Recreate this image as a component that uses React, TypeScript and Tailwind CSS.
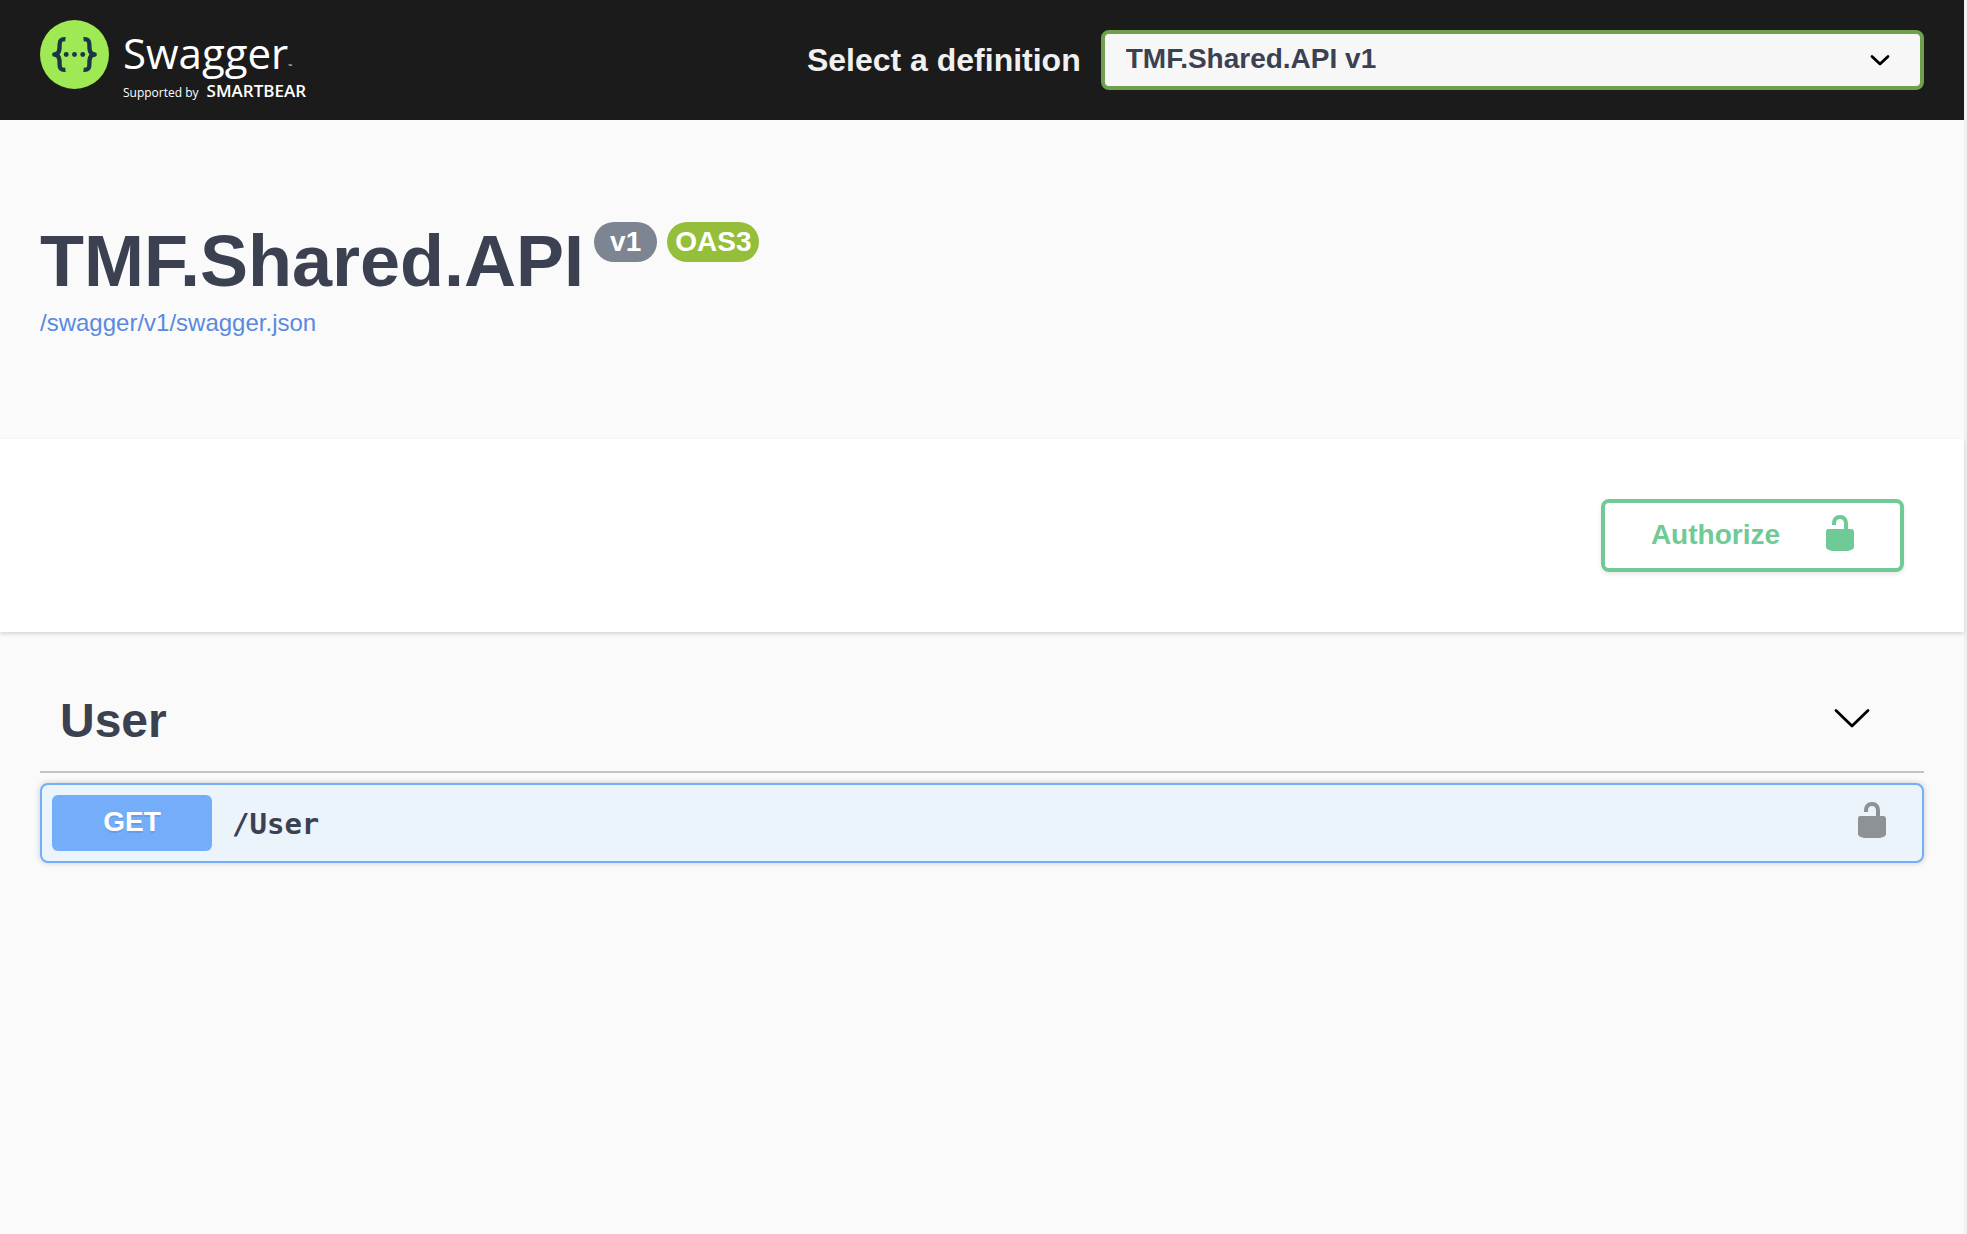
import React from "react";

function SwaggerMark() {
  return (
    <svg className="size-[69px] shrink-0" viewBox="0 0 70 70" aria-hidden="true">
      <circle cx="35" cy="35" r="35" fill="#9fe954" />
      <g fill="none" stroke="#1b3644" strokeWidth="4.4" strokeLinejoin="round">
        <path d="M25.8 19.5C21.5 19 19.8 20.8 19.9 25c.1 5.500-.2 9.500-5.400 10 5.200.5 5.500 4.500 5.400 10-.1 4.200 1.600 6 5.900 5.500" />
        <path d="M44.200 19.500c4.300-.5 6 1.300 5.900 5.500-.1 5.500.2 9.500 5.400 10-5.200.5-5.500 4.500-5.400 10 .1 4.200-1.600 6-5.900 5.500" />
      </g>
      <g fill="#1b3644">
        <circle cx="26.600" cy="35" r="2.500" />
        <circle cx="35" cy="35" r="2.500" />
        <circle cx="43.400" cy="35" r="2.500" />
      </g>
    </svg>
  );
}

function UnlockedIcon({ className }: { className: string }) {
  return (
    <svg className={className} viewBox="0 0 20 20" fill="currentColor" aria-hidden="true">
      <path d="M15.8 8H14V5.6C14 2.703 12.665 1 10 1 7.334 1 6 2.703 6 5.6V6h2v-.801C8 3.754 8.797 3 10 3c1.203 0 2 .754 2 2.199V8H4c-.553 0-1 .646-1 1.199V17c0 .549.428 1.139.951 1.307l1.197.387C5.672 18.861 6.55 19 7.1 19h5.8c.549 0 1.428-.139 1.951-.307l1.196-.387c.524-.167.953-.757.953-1.306V9.199C17 8.646 16.352 8 15.8 8z" />
    </svg>
  );
}

function Chevron({ className, d, width }: { className: string; d: string; width: number }) {
  return (
    <svg className={className} viewBox="0 0 40 40" fill="none" stroke="black" strokeWidth={width} strokeLinecap="round" strokeLinejoin="round" aria-hidden="true">
      <path d={d} />
    </svg>
  );
}

function Topbar() {
  return (
    <header className="flex h-[120px] items-center bg-[#1b1b1b] px-10">
      <a href="#" className="mr-auto flex h-20 gap-[14px] font-['Open_Sans',sans-serif] text-white">
        <SwaggerMark />
        <span className="flex flex-col pt-1">
          <span className="flex items-end">
            <span className="text-[42px] leading-[57px]">Swagger</span>
            <span className="pb-3 text-[5px] leading-[6px]">™</span>
          </span>
          <span className="flex items-baseline gap-2 leading-5">
            <span className="text-[12px]">Supported by</span>
            <span className="text-[17px] font-semibold">SMARTBEAR</span>
          </span>
        </span>
      </a>
      <label htmlFor="definition" className="mr-5 text-[32px] leading-10 font-bold text-[#f0f0f0]">
        Select a definition
      </label>
      <div className="relative w-[43.7%]">
        <select
          id="definition"
          className="block h-[60px] w-full appearance-none rounded-lg border-4 border-[#70a04c] bg-[#f7f7f7] px-[21px] pb-[2px] text-[28px] leading-8 font-bold text-[#3b4151]"
        >
          <option>TMF.Shared.API v1</option>
        </select>
        <Chevron className="pointer-events-none absolute top-[10px] right-6 size-10" d="M12 16.500 20 24l8-7.500" width={2.800} />
      </div>
    </header>
  );
}

export default function App() {
  return (
    <div className="min-h-screen border-r-[3px] border-[#f1f1f1] bg-[#fafafa] font-['Liberation_Sans',Arial,sans-serif] text-[#3b4151]">
      <Topbar />
      <main>
        <section className="px-10 pt-[100px] pb-[102px]">
          <div className="flex items-start">
            <h1 className="text-[72px] leading-[82px] font-bold">TMF.Shared.API</h1>
            <span className="mt-[2px] ml-[10px] flex items-start gap-[10px] text-[28px] leading-10 font-bold text-white">
              <span className="h-10 rounded-[20px] bg-[#7d8492] px-4">v1</span>
              <span className="h-10 rounded-[20px] bg-[#95bf3b] px-2">OAS3</span>
            </span>
          </div>
          <a href="/swagger/v1/swagger.json" className="mt-[7px] block w-fit text-2xl leading-7 text-[#5a8ade]">
            /swagger/v1/swagger.json
          </a>
        </section>

        <section className="flex justify-end bg-white px-[60px] py-[60px] shadow-[0_2px_4px_rgba(0,0,0,0.15)]">
          <button type="button" className="flex h-[73px] items-center rounded-lg border-4 border-[#70ca96] pr-10 pl-[46px] text-[28px] leading-8 font-bold text-[#70ca96] shadow-[0_2px_4px_rgba(0,0,0,0.1)]">
            <span className="mr-10 pb-[2px]">Authorize</span>
            <UnlockedIcon className="mb-[6px] size-10" />
          </button>
        </section>

        <section className="px-10 pt-[50px]">
          <button type="button" className="flex h-[91px] w-full items-start justify-between border-b-2 border-[#c1c3c8] pr-[52px] pl-5">
            <h2 className="pt-3 text-5xl leading-[54px] font-bold">User</h2>
            <Chevron className="mt-4 size-10" d="M4 12.500 20 28l16-15.500" width={2.800} />
          </button>
          <div className="mt-[10px] flex h-20 items-center rounded-lg border-2 border-[#74adfa] bg-[#ebf3fb] pr-[30px] pl-[10px] shadow-[0_0_6px_rgba(0,0,0,0.19)]">
            <button type="button" className="flex grow items-center text-left">
              <span className="h-14 w-40 rounded-md bg-[#74adfa] text-center text-[28px] leading-[54px] font-bold text-white [text-shadow:0_2px_0_rgba(0,0,0,0.1)]">
                GET
              </span>
              <span className="ml-5 pt-[2px] font-['DejaVu_Sans_Mono',monospace] text-[29px] leading-8 font-bold">/User</span>
            </button>
            <button type="button" aria-label="Authorization button unlocked" className="mb-[6px] text-[#8e9195]">
              <UnlockedIcon className="size-10" />
            </button>
          </div>
        </section>
      </main>
    </div>
  );
}
